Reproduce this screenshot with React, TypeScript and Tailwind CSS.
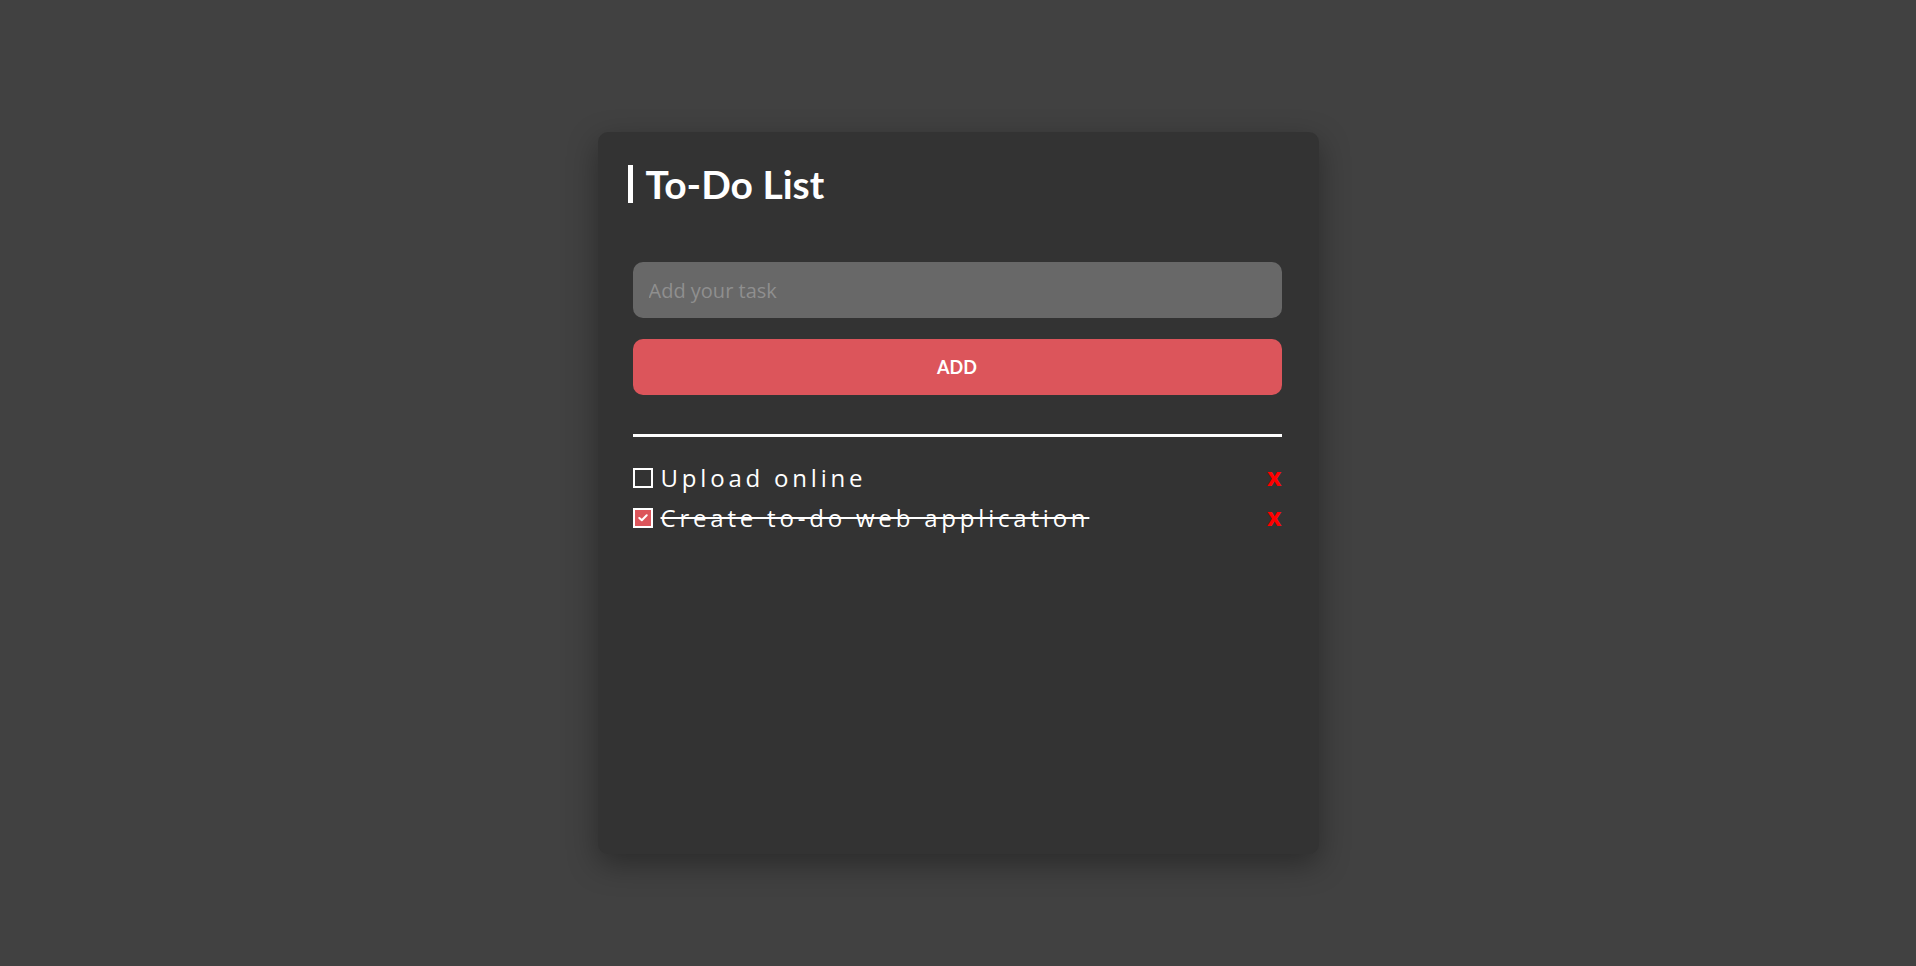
import React, { useState } from "react";

type Task = { id: number; text: string; done: boolean };

export default function App() {
  const [tasks, setTasks] = useState<Task[]>([
    { id: 1, text: "Upload online", done: false },
    { id: 2, text: "Create to-do web application", done: true },
  ]);
  const [value, setValue] = useState("");

  const add = () => {
    if (!value.trim()) return;
    setTasks([...tasks, { id: Date.now(), text: value.trim(), done: false }]);
    setValue("");
  };

  return (
    <div className="min-h-screen w-full bg-[#414141] pt-[132px] flex justify-center" style={{ fontFamily: '"Open Sans", "Noto Sans", sans-serif' }}>
      <div className="w-[721px] h-[722px] bg-[#333333] rounded-[10px] shadow-[0_10px_30px_rgba(0,0,0,0.35)] pl-[30px] pr-[37px] pt-[33px]">
        <h1
          className="border-l-[5px] border-white pl-[13px] text-[39px] leading-[38px] font-bold text-white"
          style={{ fontFamily: 'Lato, "Open Sans", sans-serif' }}
        >
          To-Do List
        </h1>
        <div className="ml-[5px] mt-[59px]">
          <input
            value={value}
            onChange={(e) => setValue(e.target.value)}
            placeholder="Add your task"
            className="block w-full h-[56px] rounded-[10px] bg-[#686868] px-4 text-[20px] text-white placeholder:text-[#8f8f8f] outline-none"
            style={{ fontFamily: '"Open Sans", sans-serif' }}
          />
          <button
            onClick={add}
            className="block w-full h-[56px] mt-[21px] rounded-[10px] bg-[#dc555b] text-white text-[18px] font-bold"
            style={{ fontFamily: 'Lato, "Open Sans", sans-serif' }}
          >
            ADD
          </button>
          <div className="mt-[39px] h-[3px] bg-white" />
          <ul className="mt-[21px]">
            {tasks.map((t) => (
              <li key={t.id} className="flex items-center h-[40px]">
                <button
                  onClick={() => setTasks(tasks.map((x) => (x.id === t.id ? { ...x, done: !x.done } : x)))}
                  className={`w-[20px] h-[20px] border-2 border-white flex items-center justify-center shrink-0 ${t.done ? "bg-[#dc555b]" : "bg-transparent"}`}
                >
                  {t.done && (
                    <svg width="10" height="8" viewBox="0 0 10 8" fill="none">
                      <path d="M1.3 4 L3.8 6.3 L8.7 1.3" stroke="white" strokeWidth="2" strokeLinecap="round" strokeLinejoin="round" />
                    </svg>
                  )}
                </button>
                <span
                  className={`ml-[8px] text-[24px] leading-none text-white tracking-[3.8px] ${t.done ? "line-through" : ""}`}
                  style={{ fontFamily: '"Open Sans", sans-serif' }}
                >
                  {t.text}
                </span>
                <button
                  onClick={() => setTasks(tasks.filter((x) => x.id !== t.id))}
                  className="ml-auto text-[25px] font-bold text-[#ff0000] leading-none -mt-[4px]"
                  style={{ fontFamily: '"Open Sans", sans-serif' }}
                >
                  x
                </button>
              </li>
            ))}
          </ul>
        </div>
      </div>
    </div>
  );
}
